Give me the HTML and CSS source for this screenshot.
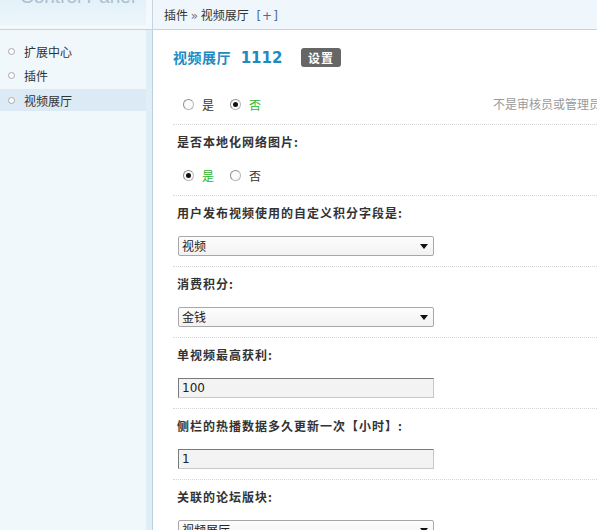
FILE: index.html
```html
<!DOCTYPE html>
<html lang="zh">
<head>
<meta charset="utf-8">
<title>视频展厅</title>
<link rel="stylesheet" href="styles.css">
</head>
<body>
<div class="header">
  <div class="logo"><div class="logo-box"><span class="logo-text">Control Panel</span></div></div>
  <div class="logo-gap"></div>
  <div class="crumb">插件 <span class="raquo">»</span> 视频展厅 <a class="plus">[+]</a></div>
</div>
<div class="main">
  <div class="sidebar">
    <ul class="menu">
      <li class="menu-item"><span class="dot"></span>扩展中心</li>
      <li class="menu-item"><span class="dot"></span>插件</li>
      <li class="menu-item active"><span class="dot"></span>视频展厅</li>
    </ul>
  </div>
  <div class="side-strip"></div>
  <div class="content">
    <div class="title-bar">
      <h1 class="title">视频展厅 <span class="num">1112</span></h1>
      <span class="badge">设置</span>
    </div>
    <div class="row first">
      <div class="ctrl">
        <span class="radio"></span><span class="opt">是</span>
        <span class="radio checked"></span><span class="opt on">否</span>
      </div>
      <div class="tip">不是审核员或管理员时发布视频是否需要审核</div>
    </div>
    <div class="row">
      <div class="label">是否本地化网络图片:</div>
      <div class="ctrl">
        <span class="radio checked"></span><span class="opt on">是</span>
        <span class="radio"></span><span class="opt">否</span>
      </div>
    </div>
    <div class="row">
      <div class="label">用户发布视频使用的自定义积分字段是:</div>
      <div class="select"><span class="sel-text">视频</span><span class="arrow"></span></div>
    </div>
    <div class="row">
      <div class="label">消费积分:</div>
      <div class="select"><span class="sel-text">金钱</span><span class="arrow"></span></div>
    </div>
    <div class="row">
      <div class="label">单视频最高获利:</div>
      <div class="input">100</div>
    </div>
    <div class="row">
      <div class="label">侧栏的热播数据多久更新一次【小时】:</div>
      <div class="input">1</div>
    </div>
    <div class="row">
      <div class="label">关联的论坛版块:</div>
      <div class="select"><span class="sel-text">视频展厅</span><span class="arrow"></span></div>
    </div>
  </div>
</div>
</body>
</html>
```
FILE: styles.css
```css
html, body {
  margin: 0;
  padding: 0;
  height: 100%;
  overflow: hidden;
  background: #fff;
}
body {
  font-family: "Noto Sans CJK SC", "DejaVu Sans", sans-serif;
  font-size: 12px;
  color: #333;
}
.header {
  display: flex;
  height: 29px;
  border-bottom: 1px solid #c2d5e3;
}
.logo {
  width: 146px;
  background: #f3f9fc;
  overflow: hidden;
}
.logo-box {
  height: 25px;
  background: linear-gradient(#e4f1f9, #ecf6fb);
  overflow: hidden;
}
.logo-text {
  display: block;
  margin-top: -14px;
  padding-left: 20px;
  font-family: "Liberation Sans", sans-serif;
  font-size: 19px;
  line-height: 22px;
  color: #a9c0d0;
}
.logo-gap {
  width: 6px;
  background: #f3f9fc;
  border-right: 1px solid #c5d6e2;
}
.crumb {
  flex: 1;
  background: #eff7fc;
  padding-left: 11px;
  line-height: 29px;
  white-space: nowrap;
  color: #333;
}
.raquo {
  color: #777;
  font-family: "DejaVu Sans", sans-serif;
  font-size: 12px;
}
.plus {
  color: #46709a;
  margin-left: 5px;
  font-family: "DejaVu Sans", sans-serif;
  font-size: 12px;
  letter-spacing: 1px;
}
.main {
  display: flex;
  height: 500px;
}
.sidebar {
  width: 146px;
  background: #f0f8fc;
}
.side-strip {
  width: 6px;
  background: #e0eef7;
  border-right: 1px solid #bcd0df;
}
.menu {
  list-style: none;
  margin: 0;
  padding: 9px 0 0 0;
}
.menu-item {
  display: flex;
  align-items: center;
  height: 24px;
  padding-left: 8px;
  color: #333;
}
.menu-item.active {
  background: #dbeaf5;
  height: 22px;
  margin-top: 2px;
}
.dot {
  width: 5px;
  height: 5px;
  border: 1px solid #a9a9a9;
  border-radius: 50%;
  background: #fff;
  margin-right: 9px;
}
.content {
  flex: 1;
  padding-left: 20px;
  min-width: 0;
}
.title-bar {
  display: flex;
  align-items: center;
  padding-top: 18px;
  height: 19px;
}
.title {
  margin: 0;
  font-size: 14px;
  font-weight: bold;
  color: #1f8ac0;
  line-height: 19px;
  width: 128px;
  white-space: nowrap;
  letter-spacing: 0.5px;
}
.num {
  font-family: "DejaVu Sans", sans-serif;
  font-size: 15px;
  margin-left: 6px;
  letter-spacing: 0;
}
.badge {
  display: inline-block;
  background: #666;
  color: #fff;
  font-weight: bold;
  font-size: 12px;
  line-height: 19px;
  height: 19px;
  padding: 0 7px;
  border-radius: 3px;
  letter-spacing: 1px;
}
.row {
  border-bottom: 1px dotted #d6d6d6;
  padding: 7px 0 10px 4px;
}
.row.first {
  display: grid;
  grid-template-columns: 316px 1fr;
  padding-top: 27px;
}
.label {
  font-weight: bold;
  line-height: 20px;
  height: 20px;
  margin-bottom: 13px;
  color: #333;
  white-space: nowrap;
  letter-spacing: 1px;
}
.ctrl {
  display: flex;
  align-items: center;
  height: 20px;
}
.tip {
  color: #999;
  line-height: 20px;
  white-space: nowrap;
  overflow: hidden;
}
.radio {
  width: 9px;
  height: 9px;
  border-radius: 50%;
  border: 1px solid #b8b8b8;
  border-left-color: #8f8f8f;
  border-top-color: #8f8f8f;
  background: #fbfbfb;
  margin-left: 6px;
  position: relative;
}
.radio + .opt {
  margin-left: 8px;
}
.opt + .radio {
  margin-left: 16px;
}
.radio.checked::after {
  content: "";
  position: absolute;
  left: 2px;
  top: 2px;
  width: 5px;
  height: 5px;
  border-radius: 50%;
  background: #111;
}
.opt.on {
  color: #2bb52b;
}
.select {
  display: flex;
  align-items: center;
  box-sizing: border-box;
  width: 256px;
  height: 20px;
  margin-left: 1px;
  border: 1px solid #a8a8a8;
  border-radius: 2px;
  background: linear-gradient(#fdfdfd, #f2f2f2);
}
.sel-text {
  flex: 1;
  padding-left: 3px;
  color: #222;
  line-height: 18px;
}
.arrow {
  width: 0;
  height: 0;
  border-left: 4px solid transparent;
  border-right: 4px solid transparent;
  border-top: 5px solid #111;
  margin-right: 5px;
}
.input {
  box-sizing: border-box;
  width: 256px;
  height: 20px;
  margin-left: 1px;
  border: 1px solid #c8c8c8;
  border-top-color: #7a7a7a;
  border-left-color: #7a7a7a;
  background: #f3f3f3;
  padding-left: 3px;
  line-height: 18px;
  color: #222;
  font-family: "DejaVu Sans", sans-serif;
  font-size: 12px;
}
```
